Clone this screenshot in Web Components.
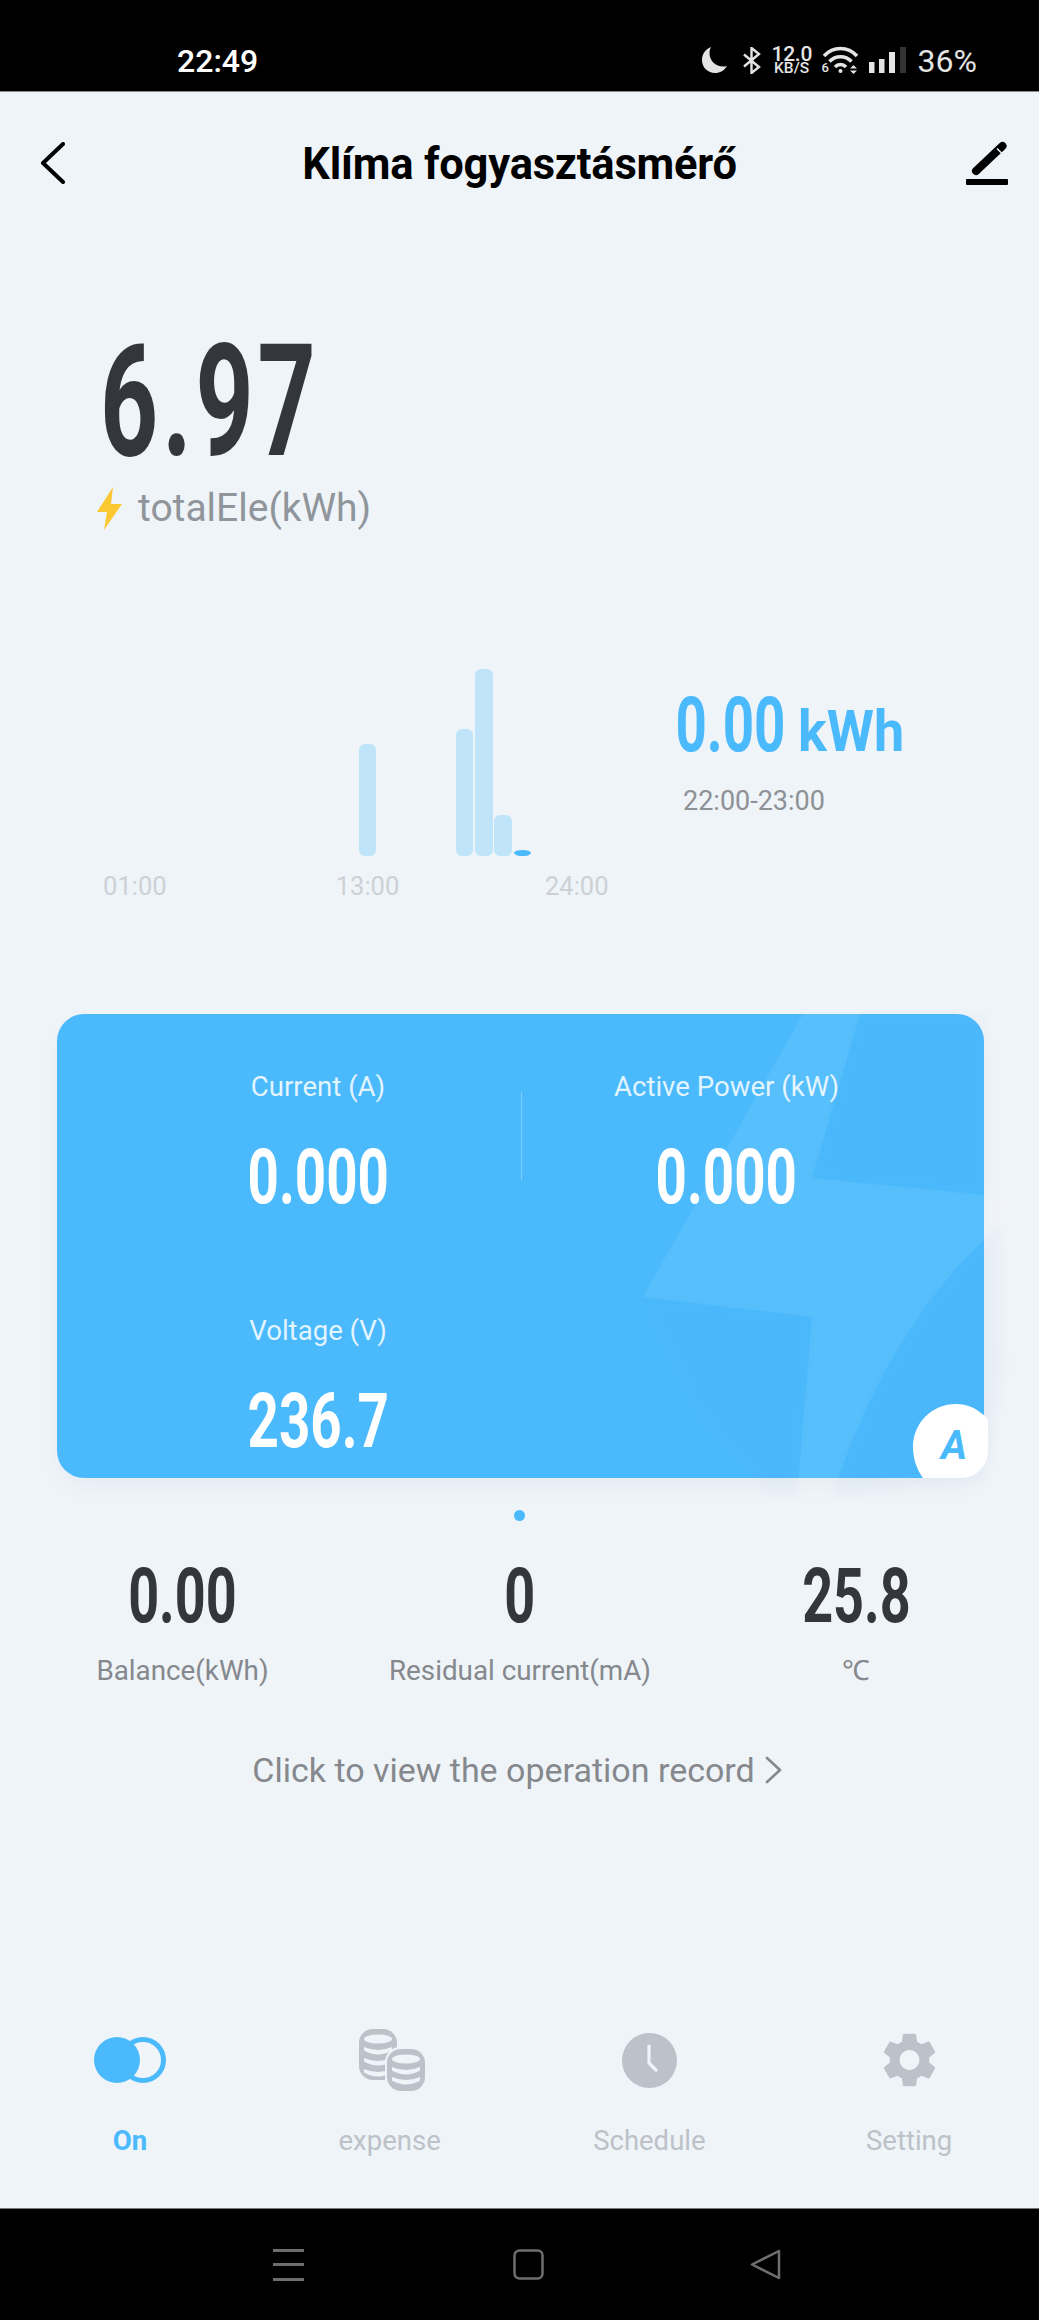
<!DOCTYPE html>
<html>
<head>
<meta charset="utf-8">
<title>Klíma fogyasztásmérő</title>
<style>
  html, body { margin: 0; padding: 0; background: #eff4f9; }
  body { font-family: Roboto, "Liberation Sans", sans-serif; }
</style>
</head>
<body>
<meter-app></meter-app>

<template id="din-number-tpl">
  <style>
    :host { display: inline-flex; justify-content: center; color: inherit; }
    span { flex: none; white-space: nowrap; font-weight: 700; line-height: 1; display: block; }
  </style>
  <span></span>
</template>

<template id="status-bar-tpl">
  <style>
    :host { display: flex; align-items: center; height: 92px; box-sizing: border-box; background: #000; color: #fff; padding: 0 62px 0 177px; border-bottom: 1px solid #888; font-family: Roboto, sans-serif; }
    .time { font-size: 32px; font-weight: 500; padding-top: 30px; line-height: 32px; }
    .icons { margin-left: auto; display: flex; align-items: center; color: #e4e4e4; padding-top: 29px; }
    svg { display: block; flex: none; }
    .speed { width: 40px; margin: 0 10px 0 11px; text-align: center; }
    .speed b { display: block; font-size: 21px; line-height: 16px; font-weight: 500; letter-spacing: -.3px; }
    .speed i { display: block; font-size: 15.5px; line-height: 13px; font-style: normal; font-weight: 500; white-space: nowrap; }
    .wifi { position: relative; width: 37px; height: 28px; margin-right: 10px; }
    .wifi em { position: absolute; left: 0; bottom: -1px; font: normal 500 13px/14px Roboto, sans-serif; }
    .pct { font-size: 32px; line-height: 32px; margin-left: 12px; font-weight: 400; padding-top: 2px; }
  </style>
  <div class="time">22:49</div>
  <div class="icons">
    <svg width="25" height="26" viewBox="0 0 25 26" style="margin-right:16px"><path fill="currentColor" d="M9 0C3.6 2 0 7 0 13c0 7.5 5.8 13 13 13 5 0 9.4-2.6 12-7-1.2.4-2.4.6-3.7.6C13.5 19.6 7.5 13.6 7.5 6c0-2.2.5-4.200 1.500-6z"/></svg>
    <svg width="18" height="27" viewBox="0 0 18 27" fill="none" stroke="currentColor" stroke-width="2.4"><path d="M1 7.5l15 12.5-7.5 6V1l7.5 6L1 19.5"/></svg>
    <div class="speed"><b>12.0</b><i>KB/S</i></div>
    <div class="wifi">
      <svg width="37" height="28" viewBox="0 0 37 28" fill="none" stroke="currentColor" stroke-width="3.5" style="position:absolute;left:0;top:0"><path d="M2 10C11 0 26 0 35 10"/><path d="M7.5 15.5c6-6.5 16-6.5 22 0"/><path d="M13 21c3-3.3 8-3.3 11 0"/><circle cx="18.5" cy="25" r="2" fill="currentColor" stroke="none"/><path d="M28 22.5l3.5-3.5 3.5 3.5zM28 24.5l3.5 3.5 3.5-3.5z" fill="currentColor" stroke="none"/></svg>
      <em>6</em>
    </div>
    <svg width="37" height="26" viewBox="0 0 37 26"><g fill="currentColor"><rect x="0" y="15" width="5.5" height="11"/><rect x="10" y="12" width="5.5" height="14"/><rect x="20" y="5" width="6" height="21"/></g><rect x="31" y="0" width="6" height="26" fill="#333"/></svg>
    <div class="pct">36%</div>
  </div>
</template>

<template id="app-header-tpl">
  <style>
    :host { display: grid; grid-template-columns: 1fr auto 1fr; align-items: center; height: 141px; padding: 0 31px; color: #000; }
    h1 { margin: 0; font: 700 43.5px/48px Roboto, sans-serif; letter-spacing: -.2px; white-space: nowrap; padding-top: 4px; }
    svg { display: block; }
    .back { margin-left: 9px; }
    .edit { justify-self: end; }
  </style>
  <svg class="back" width="25" height="42" viewBox="0 0 25 42" fill="none" stroke="#000" stroke-width="4" stroke-linecap="round" stroke-linejoin="round"><path d="M23 2L3 21l20 19"/></svg>
  <h1><slot></slot></h1>
  <svg class="edit" width="42" height="44" viewBox="0 0 42 44"><path d="M36.5 5L10 30" stroke="#000" stroke-width="8" stroke-linecap="round"/><path d="M31 7.5l4.500 4.500" stroke="#eff4f9" stroke-width="1.5"/><rect x="0" y="38" width="42" height="6" rx="1" fill="#000"/></svg>
</template>

<template id="total-summary-tpl">
  <style>
    :host { display: block; padding: 91px 0 0 107px; color: #33363b; }
    .row { display: flex; align-items: center; margin: 5px 0 0 -10px; color: #8f959b; font-size: 39px; line-height: 46px; }
    svg { display: block; margin-right: 16px; }
  </style>
  <din-number value="6.97" size="156" scale=".65" spacing="6" width="206"></din-number>
  <div class="row">
    <svg width="25" height="43" viewBox="0 0 25 43"><path fill="#fcc832" d="M16 0L0 25h10L7 43l18-26H14z"/></svg>
    <slot></slot>
  </div>
</template>

<template id="usage-chart-tpl">
  <style>
    :host { display: grid; grid-template-columns: 553px 1fr; padding-left: 126px; margin-top: 138px; }
    .bars, .axis { display: grid; grid-template-columns: repeat(24, 17.6px); column-gap: 1.8px; }
    .bars { height: 187px; align-items: end; }
    .bar { background: #c0e4fa; border-radius: 6px; }
    .bar.on { background: #4bbafd; border-radius: 50%; }
    .axis { margin-top: 15px; font-size: 25.5px; line-height: 30px; color: #cdd1d5; }
    .axis span { justify-self: center; white-space: nowrap; }
    .axis span:last-child { margin-right: 8px; }
    .readout { color: #4bbafd; padding-top: 18px; }
    .value { display: flex; align-items: baseline; }
    .unit { margin-left: 16px; }
    .range { margin: 22px 0 0 4px; color: #8e9195; font-size: 27px; line-height: 32px; }
  </style>
  <div class="plot">
    <div class="bars"></div>
    <div class="axis"></div>
  </div>
  <div class="readout">
    <div class="value">
      <din-number value="0.00" size="76" scale=".72" width="103"></din-number>
      <din-number class="unit" value="kWh" size="58" scale=".93" width="107"></din-number>
    </div>
    <div class="range">22:00-23:00</div>
  </div>
</template>

<template id="metric-card-tpl">
  <style>
    :host { display: block; position: relative; margin: 113px 55px 0 57px; height: 464px; border-radius: 27px; background: #4bbafd; box-shadow: 0 10px 18px rgba(90, 120, 150, .05); color: #fff; }
    .art { position: absolute; left: 0; top: 0; overflow: visible; }
    .grid { position: relative; display: grid; grid-template-columns: 406px 1px 1fr; grid-auto-rows: 244px; padding: 57px 53px 0 58px; }
    .rule { background: rgba(255, 255, 255, .28); height: 88px; margin-top: 21px; }
    .badge { position: absolute; right: -4px; bottom: 0; width: 75px; height: 74px; }
    .badge span { position: absolute; left: 28px; top: 22px; font: italic 700 40px/40px Roboto, sans-serif; color: #4bbafd; }
    .badge svg { display: block; }
  </style>
  <svg class="art" width="927" height="464" viewBox="0 0 927 464">
    <defs><filter id="soft" x="-20%" y="-20%" width="140%" height="140%"><feGaussianBlur stdDeviation="5"/></filter></defs>
    <g fill="#24618a" opacity=".025" filter="url(#soft)">
      <path d="M803 0L755 164 927 179 927 0z"/>
      <path d="M586 283L755 303 740 482 713 482 640 400z"/>
      <path d="M945 209Q833 306 775 482L927 464 948 360z"/>
    </g>
    <path fill="#fff" opacity=".075" d="M746 0H803L755 164 950 183 945 209Q833 306 775 482H740L755 303 586 283z"/>
  </svg>
  <div class="grid">
    <slot name="a"></slot>
    <div class="rule"></div>
    <slot name="b"></slot>
    <slot name="c"></slot>
  </div>
  <div class="badge">
    <svg width="75" height="74" viewBox="0 0 75 74"><path fill="#fff" d="M43 0C52 0 61 3 68 9c3 2 5 4 7 6v32c0 15-12 27-27 27H10C4 66 0 55 0 43 0 19 19 0 43 0z"/></svg>
    <span>A</span>
  </div>
</template>

<template id="metric-cell-tpl">
  <style>
    :host { display: block; text-align: center; }
    .label { font-size: 27.6px; line-height: 32px; color: rgba(255, 255, 255, .85); white-space: nowrap; }
    din-number { margin-top: 36px; }
  </style>
  <div class="label"><slot></slot></div>
  <din-number size="76" scale=".72" width="139"></din-number>
</template>

<template id="page-dots-tpl">
  <style>
    :host { display: flex; justify-content: center; margin-top: 32px; }
    i { width: 11px; height: 11px; border-radius: 50%; background: #4bbafd; }
  </style>
  <i></i>
</template>

<template id="stat-row-tpl">
  <style>
    :host { display: grid; grid-template-columns: 365px 310px 362px; margin-top: 37px; }
  </style>
  <slot></slot>
</template>

<template id="stat-item-tpl">
  <style>
    :host { display: block; text-align: center; color: #33363b; }
    .label { margin-top: 21px; font-size: 27.8px; line-height: 32px; color: #85888c; white-space: nowrap; }
  </style>
  <din-number size="76" scale=".71" width="105"></din-number>
  <div class="label"><slot></slot></div>
</template>

<template id="record-link-tpl">
  <style>
    :host { display: flex; justify-content: center; align-items: center; gap: 10px; margin-top: 63px; padding-right: 5px; color: #85888c; font-size: 34px; line-height: 40px; }
    svg { display: block; }
  </style>
  <span><slot></slot></span>
  <svg width="17" height="28" viewBox="0 0 17 28" fill="none" stroke="#85888c" stroke-width="2.6" stroke-linecap="round" stroke-linejoin="round"><path d="M2 2l13 12L2 26"/></svg>
</template>

<template id="tab-bar-tpl">
  <style>
    :host { display: grid; grid-template-columns: repeat(4, 1fr); margin-top: auto; height: 180px; }
  </style>
  <slot></slot>
</template>

<template id="tab-item-tpl">
  <style>
    :host { display: flex; flex-direction: column; align-items: center; color: #bdc1c8; font-size: 27.5px; line-height: 30px; }
    :host([active]) { color: #4bbafd; font-weight: 700; }
    .icon { height: 64px; display: flex; align-items: center; justify-content: center; margin-bottom: 34px; }
  </style>
  <div class="icon"><slot name="icon"></slot></div>
  <div><slot></slot></div>
</template>

<template id="nav-bar-tpl">
  <style>
    :host { display: flex; height: 112px; background: #000; border-top: 1px solid #777; box-sizing: border-box; align-items: center; padding-left: 273px; }
    svg { display: block; flex: none; }
  </style>
  <svg width="31" height="32" viewBox="0 0 31 32" fill="#6e6e6e"><rect y="0" width="31" height="3"/><rect y="14" width="31" height="3"/><rect y="29" width="31" height="3"/></svg>
  <svg width="31" height="31" viewBox="0 0 31 31" fill="none" stroke="#6e6e6e" stroke-width="2.5" style="margin-left:209px"><rect x="1.5" y="1.5" width="28" height="28" rx="5"/></svg>
  <svg width="31" height="31" viewBox="0 0 31 31" fill="none" stroke="#6e6e6e" stroke-width="2.5" stroke-linejoin="round" style="margin-left:206px"><path d="M29 2L2 15.5 29 29z"/></svg>
</template>

<script>
// clone a template by id into an open shadow root
class Base extends HTMLElement {
  constructor() {
    super();
    this.attachShadow({ mode: "open" });
    const tpl = document.getElementById(this.localName + "-tpl");
    this.shadowRoot.appendChild(tpl.content.cloneNode(true));
  }
}

// the app's condensed number face: Roboto squeezed horizontally
class DinNumber extends Base {
  static get observedAttributes() { return ["value"]; }
  connectedCallback() { this.render(); }
  attributeChangedCallback() { this.render(); }
  render() {
    const span = this.shadowRoot.querySelector("span");
    const size = this.getAttribute("size") || 76;
    span.textContent = this.getAttribute("value") || "";
    span.style.fontSize = size + "px";
    span.style.transform = `scaleX(${this.getAttribute("scale") || 1})`;
    span.style.letterSpacing = (this.getAttribute("spacing") || 0) + "px";
    this.style.width = (this.getAttribute("width") || 100) + "px";
  }
}

class UsageChart extends Base {
  connectedCallback() {
    const heights = { 12: 112, 17: 127, 18: 187, 19: 41, 20: 6 };
    const bars = this.shadowRoot.querySelector(".bars");
    for (let i = 0; i < 24; i++) {
      const bar = document.createElement("div");
      bar.className = i === 20 ? "bar on" : "bar";
      bar.style.height = (heights[i] || 0) + "px";
      bars.appendChild(bar);
    }
    const axis = this.shadowRoot.querySelector(".axis");
    [[1, "01:00"], [13, "13:00"], [24, "24:00"]].forEach(([col, text]) => {
      const label = document.createElement("span");
      label.style.gridColumn = col;
      label.textContent = text;
      axis.appendChild(label);
    });
  }
}

class MetricCell extends Base {
  connectedCallback() {
    this.shadowRoot.querySelector("din-number").setAttribute("value", this.getAttribute("value"));
  }
}

class StatItem extends Base {
  connectedCallback() {
    this.shadowRoot.querySelector("din-number").setAttribute("value", this.getAttribute("value"));
  }
}

class MeterApp extends HTMLElement {
  constructor() {
    super();
    this.attachShadow({ mode: "open" });
    this.shadowRoot.innerHTML = `
      <style>
        :host { display: flex; flex-direction: column; width: 1039px; height: 2320px; background: #eff4f9; overflow: hidden; }
      </style>
      <status-bar></status-bar>
      <app-header>Klíma fogyasztásmérő</app-header>
      <total-summary>totalEle(kWh)</total-summary>
      <usage-chart></usage-chart>
      <metric-card>
        <metric-cell slot="a" value="0.000">Current (A)</metric-cell>
        <metric-cell slot="b" value="0.000">Active Power (kW)</metric-cell>
        <metric-cell slot="c" value="236.7">Voltage (V)</metric-cell>
      </metric-card>
      <page-dots></page-dots>
      <stat-row>
        <stat-item value="0.00">Balance(kWh)</stat-item>
        <stat-item value="0">Residual current(mA)</stat-item>
        <stat-item value="25.8">℃</stat-item>
      </stat-row>
      <record-link>Click to view the operation record</record-link>
      <tab-bar>
        <tab-item active>
          <svg slot="icon" width="72" height="46" viewBox="0 0 72 46"><circle cx="49" cy="23" r="20.5" fill="#f0f5fa" stroke="#4bbafd" stroke-width="5"/><circle cx="23" cy="23" r="23" fill="#4bbafd"/></svg>
          On
        </tab-item>
        <tab-item>
          <svg slot="icon" width="67" height="62" viewBox="0 0 67 62" style="margin-left:4px">
            <rect x="1" y="0" width="38" height="51" rx="14" fill="#bcc1ca"/>
            <ellipse cx="20" cy="10" rx="14" ry="4.5" fill="#eff4f9"/>
            <path d="M6 18q14 6 28 0v3.500q-14 8-28 0zM6 29q14 6 28 0v3.500q-14 8-28 0zM6 40q14 6 28 0v3.500q-14 8-28 0z" fill="#eff4f9"/>
            <rect x="27" y="18" width="41" height="46" rx="15" fill="#eff4f9"/>
            <rect x="29" y="20" width="38" height="42" rx="14" fill="#bcc1ca"/>
            <ellipse cx="48" cy="30" rx="14" ry="4.5" fill="#eff4f9"/>
            <path d="M34 38q14 6 28 0v3.500q-14 8-28 0zM34 48q14 6 28 0v3.500q-14 8-28 0z" fill="#eff4f9"/>
          </svg>
          expense
        </tab-item>
        <tab-item>
          <svg slot="icon" width="55" height="55" viewBox="0 0 55 55"><circle cx="27.5" cy="27.5" r="27.5" fill="#bcc1ca"/><path d="M27 13v17l7 7" fill="none" stroke="#eff4f9" stroke-width="3.2" stroke-linecap="round" stroke-linejoin="round"/></svg>
          Schedule
        </tab-item>
        <tab-item>
          <svg slot="icon" width="55" height="56" viewBox="2.4 1.8 19.2 20.4"><path fill="#bcc1ca" d="M19.14 12.94c.04-.3.06-.61.06-.94 0-.32-.02-.64-.07-.94l2.03-1.58c.18-.14.23-.41.12-.61l-1.92-3.32c-.12-.22-.37-.29-.59-.22l-2.39.96c-.5-.38-1.03-.7-1.62-.94l-.36-2.54c-.04-.24-.24-.41-.48-.41h-3.84c-.24 0-.43.17-.47.41l-.36 2.54c-.59.24-1.13.57-1.62.94l-2.39-.96c-.22-.08-.47 0-.59.22L2.74 8.87c-.12.21-.08.47.12.61l2.03 1.58c-.05.3-.09.63-.09.94s.02.64.07.94l-2.03 1.58c-.18.14-.23.41-.12.61l1.92 3.32c.12.22.37.29.59.22l2.39-.96c.5.38 1.03.7 1.62.94l.36 2.54c.05.24.24.41.48.41h3.84c.24 0 .44-.17.47-.41l.36-2.54c.59-.24 1.13-.56 1.62-.94l2.39.96c.22.08.47 0 .59-.22l1.92-3.32c.12-.22.07-.47-.12-.61l-2.01-1.58zM12 15.6c-1.98 0-3.6-1.62-3.6-3.6s1.62-3.6 3.6-3.6 3.6 1.62 3.6 3.6-1.62 3.6-3.6 3.6z"/></svg>
          Setting
        </tab-item>
      </tab-bar>
      <nav-bar></nav-bar>
    `;
  }
}

customElements.define("din-number", DinNumber);
["status-bar", "app-header", "total-summary", "metric-card", "page-dots", "stat-row", "record-link", "tab-bar", "tab-item", "nav-bar"].forEach((name) => {
  customElements.define(name, class extends Base {});
});
customElements.define("usage-chart", UsageChart);
customElements.define("metric-cell", MetricCell);
customElements.define("stat-item", StatItem);
customElements.define("meter-app", MeterApp);
</script>
</body>
</html>
